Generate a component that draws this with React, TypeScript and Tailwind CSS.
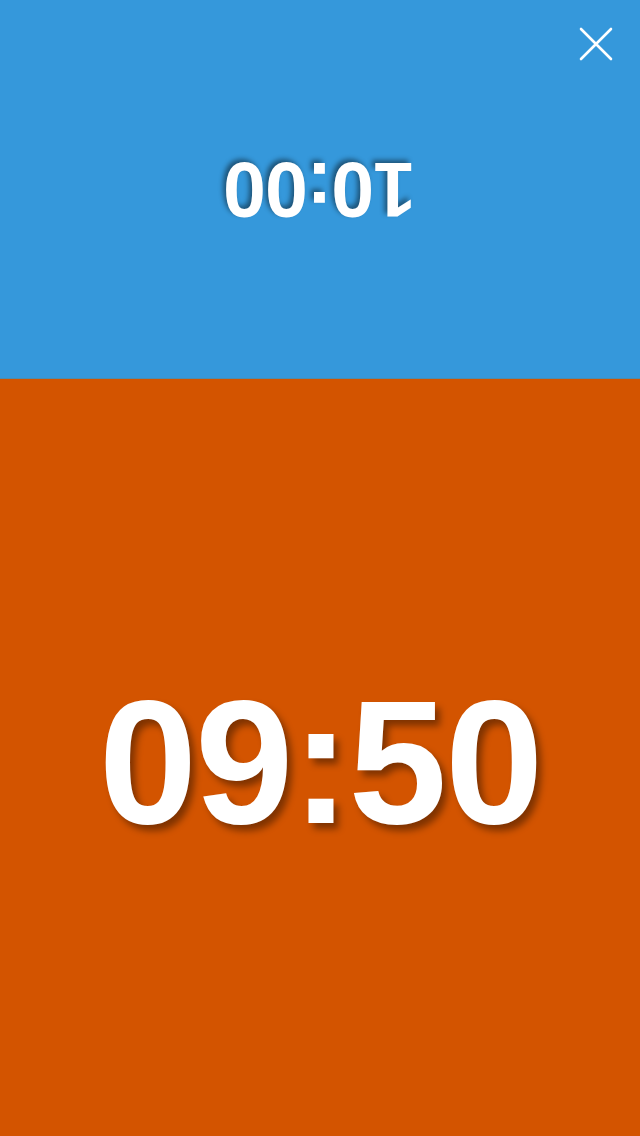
export default function App() {
  return (
    <div className="flex h-[1136px] w-[640px] flex-col overflow-hidden font-['Liberation_Sans',Arial,sans-serif]">
      {/* Opponent side, upside down */}
      <div className="relative flex h-[378px] items-center justify-center bg-[#3598db]">
        <div className="rotate-180 text-[77px] font-bold leading-none tracking-[-1px] text-white [text-shadow:3px_3px_5px_rgba(0,0,0,0.45)]">
          10:00
        </div>
        <button className="absolute right-[26px] top-[26px] flex h-9 w-9 items-center justify-center">
          <svg width="34" height="34" viewBox="0 0 34 34" fill="none" stroke="white" strokeWidth="2.6" strokeLinecap="round">
            <path d="M2 2L32 32M32 2L2 32" />
          </svg>
        </button>
      </div>

      <div className="h-px bg-[#4d8cae]" />

      {/* Active side */}
      <div className="flex flex-1 items-center justify-center bg-[#d35400] pt-[10px]">
        <div className="text-[177px] font-bold leading-none tracking-[-2px] text-white [text-shadow:5px_6px_7px_rgba(0,0,0,0.4)]">
          09:50
        </div>
      </div>
    </div>
  );
}
